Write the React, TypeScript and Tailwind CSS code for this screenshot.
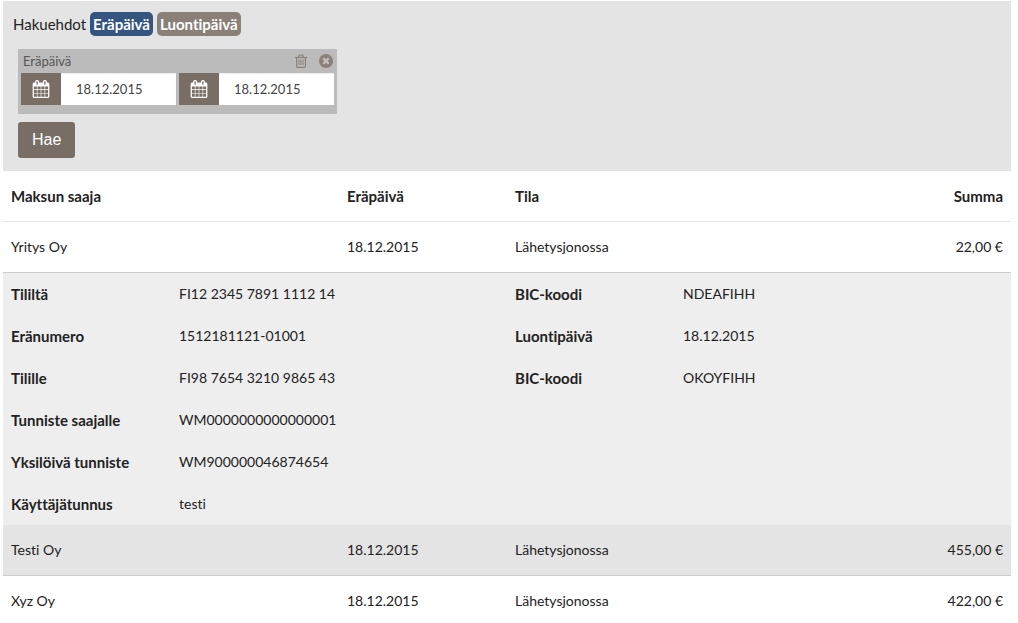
import React, { Fragment, useState } from "react";

type Detail = { label: string; value: string; label2?: string; value2?: string };
type Payment = {
  payee: string;
  due: string;
  status: string;
  amount: string;
  shaded?: boolean;
  details?: Detail[];
};

const payments: Payment[] = [
  {
    payee: "Yritys Oy",
    due: "18.12.2015",
    status: "Lähetysjonossa",
    amount: "22,00 €",
    details: [
      { label: "Tililtä", value: "FI12 2345 7891 1112 14", label2: "BIC-koodi", value2: "NDEAFIHH" },
      { label: "Eränumero", value: "1512181121-01001", label2: "Luontipäivä", value2: "18.12.2015" },
      { label: "Tilille", value: "FI98 7654 3210 9865 43", label2: "BIC-koodi", value2: "OKOYFIHH" },
      { label: "Tunniste saajalle", value: "WM0000000000000001" },
      { label: "Yksilöivä tunniste", value: "WM900000046874654" },
      { label: "Käyttäjätunnus", value: "testi" },
    ],
  },
  { payee: "Testi Oy", due: "18.12.2015", status: "Lähetysjonossa", amount: "455,00 €", shaded: true },
  { payee: "Xyz Oy", due: "18.12.2015", status: "Lähetysjonossa", amount: "422,00 €" },
];

function CalendarIcon() {
  return (
    <svg className="size-[18px]" viewBox="0 0 1792 1792" fill="#fff" aria-hidden="true">
      <path d="M192 1664h288v-288h-288v288zm352 0h320v-288h-320v288zm-352-352h288v-320h-288v320zm352 0h320v-320h-320v320zm-352-384h288v-288h-288v288zm736 736h320v-288h-320v288zm-384-736h320v-288h-320v288zm768 736h288v-288h-288v288zm-384-352h320v-320h-320v320zm-352-864v-288q0-13-9.500-22.500t-22.500-9.500h-64q-13 0-22.500 9.500t-9.500 22.500v288q0 13 9.500 22.500t22.500 9.500h64q13 0 22.500-9.500t9.500-22.500zm736 864h288v-320h-288v320zm-384-384h320v-288h-320v288zm384 0h288v-288h-288v288zm32-480v-288q0-13-9.500-22.500t-22.500-9.500h-64q-13 0-22.500 9.500t-9.500 22.500v288q0 13 9.500 22.500t22.500 9.500h64q13 0 22.500-9.500t9.500-22.500zm384-64v1280q0 52-38 90t-90 38h-1408q-52 0-90-38t-38-90v-1280q0-52 38-90t90-38h128v-96q0-66 47-113t113-47h64q66 0 113 47t47 113v96h384v-96q0-66 47-113t113-47h64q66 0 113 47t47 113v96h128q52 0 90 38t38 90z" />
    </svg>
  );
}

function TrashIcon() {
  return (
    <svg className="size-[14px]" viewBox="0 0 14 14" fill="none" stroke="#8a8078" aria-hidden="true">
      <path d="M1 3.500h12" strokeWidth="1.200" />
      <path d="M4.500 3.300 5.200 1h3.600l.7 2.300" strokeWidth="1.200" />
      <path d="M2.600 3.500v8.700q0 1.200 1.200 1.200h6.400q1.200 0 1.200-1.200V3.500" strokeWidth="1.200" />
      <path d="M5 5.500v5.500M7 5.500v5.500M9 5.500v5.500" />
    </svg>
  );
}

function CloseIcon() {
  return (
    <svg className="size-[14px]" viewBox="0 0 14 14" aria-hidden="true">
      <circle cx="7" cy="7" r="7" fill="#8a8078" />
      <path d="m4.300 4.300 5.400 5.400m0-5.400-5.400 5.400" stroke="#c4c2c0" strokeWidth="2.200" />
    </svg>
  );
}

function DateField({ label }: { label: string }) {
  const [value, setValue] = useState("18.12.2015");
  return (
    <div className="flex h-8">
      <button type="button" aria-label={`Avaa kalenteri, ${label}`} className="flex w-10 items-center justify-center bg-[#786e66]">
        <CalendarIcon />
      </button>
      <input
        type="text"
        aria-label={label}
        value={value}
        onChange={(e) => setValue(e.target.value)}
        className="w-[115px] bg-white px-[15px] text-[13px] text-[#444] shadow-[inset_0_1px_1px_rgba(0,0,0,0.08)] outline-none"
      />
    </div>
  );
}

function SearchPanel() {
  return (
    <form className="bg-[#e4e4e4] px-[15px] pt-[11px] pb-[13px]" onSubmit={(e) => e.preventDefault()}>
      <div className="-ml-[5px] flex items-center gap-1 text-[15px] leading-[22px]">
        <span>Hakuehdot</span>
        <button type="button" className="h-6 rounded-[5px] bg-[#34557f] px-[3px] font-bold text-white">Eräpäivä</button>
        <button type="button" className="h-6 rounded-[5px] bg-[#8a8078] px-[3px] font-bold text-white">Luontipäivä</button>
      </div>
      <fieldset className="mt-[13px] w-fit bg-[#bbb] px-[3px] pb-[9px]" aria-label="Eräpäivä">
        <div className="flex h-6 items-center justify-between pl-0.5">
          <span className="text-[13px] text-[#555]">Eräpäivä</span>
          <span className="flex gap-[11px] pr-px">
            <button type="button" aria-label="Tyhjennä"><TrashIcon /></button>
            <button type="button" aria-label="Poista hakuehto"><CloseIcon /></button>
          </span>
        </div>
        <div className="flex gap-[3px]">
          <DateField label="Eräpäivä alkaen" />
          <DateField label="Eräpäivä päättyen" />
        </div>
      </fieldset>
      <button type="submit" className="mt-2 block h-9 rounded-[3px] bg-[#786e66] px-3.5 font-['Liberation_Sans',sans-serif] text-base text-white">
        Hae
      </button>
    </form>
  );
}

const summaryRow = "h-[51px] [&>td]:border-b [&>td]:border-[#ccc]";

export default function App() {
  return (
    <main className="pt-px pr-[7px] pl-[3px] font-[Lato,Carlito,sans-serif] text-sm text-[#222] [font-variant-ligatures:none]">
      <SearchPanel />
      <table className="w-full table-fixed border-separate border-spacing-0 text-left leading-[22px] [&_td]:px-2 [&_th]:px-2 [&_th]:text-[15px]">
        <colgroup>
          {[0, 1, 2, 3, 4, 5].map((i) => (
            <col key={i} className="w-1/6" />
          ))}
        </colgroup>
        <thead>
          <tr className="h-[51px] [&>th]:border-b [&>th]:border-[#e4e4e4]">
            <th scope="col" colSpan={2}>Maksun saaja</th>
            <th scope="col">Eräpäivä</th>
            <th scope="col" colSpan={2}>Tila</th>
            <th scope="col" className="text-right">Summa</th>
          </tr>
        </thead>
        <tbody>
          {payments.map((p) => (
            <Fragment key={p.payee}>
              <tr className={p.shaded ? `${summaryRow} bg-[#e4e4e4]` : summaryRow}>
                <td colSpan={2}>{p.payee}</td>
                <td>{p.due}</td>
                <td colSpan={2}>{p.status}</td>
                <td className="text-right">{p.amount}</td>
              </tr>
              {p.details?.map((d) => (
                <tr key={d.label} className="h-[42px] bg-[#eee]">
                  <th scope="row">{d.label}</th>
                  <td colSpan={2}>{d.value}</td>
                  {d.label2 ? <th scope="row">{d.label2}</th> : <td />}
                  <td colSpan={2}>{d.value2}</td>
                </tr>
              ))}
            </Fragment>
          ))}
        </tbody>
      </table>
    </main>
  );
}
